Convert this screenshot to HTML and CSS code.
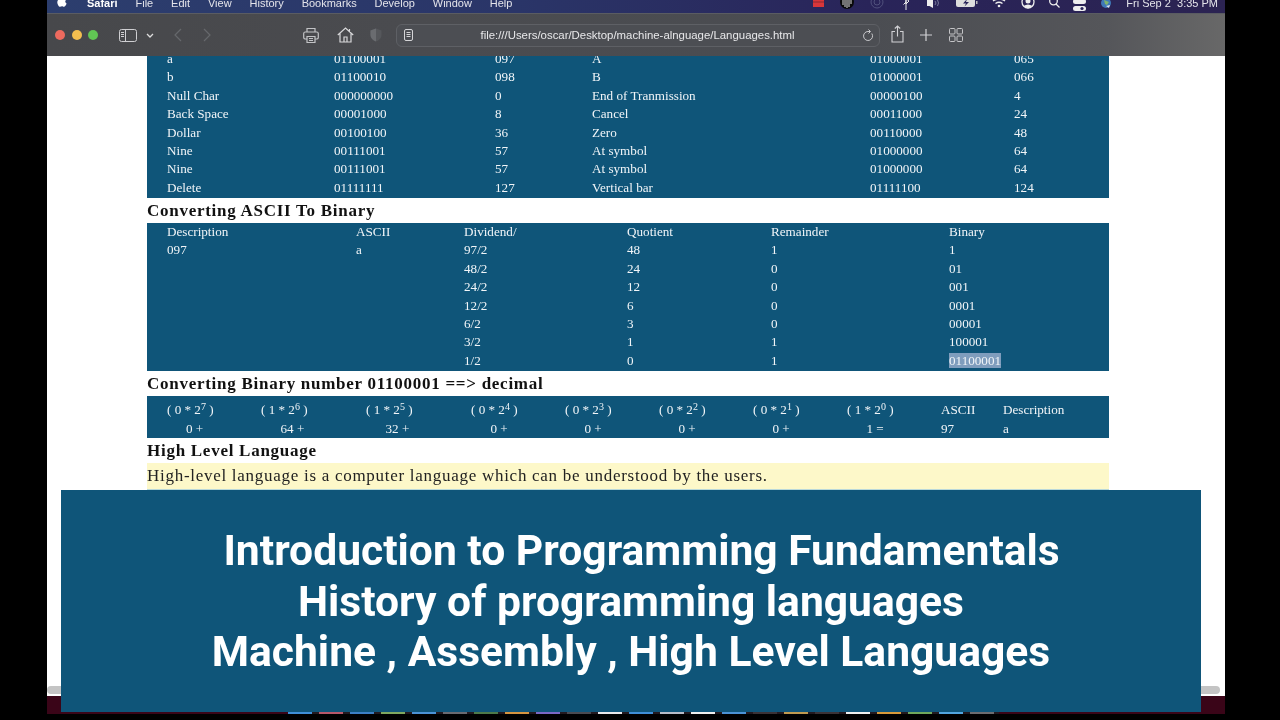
FILE: index.html
```html
<!DOCTYPE html>
<html lang="en">
<head>
<meta charset="utf-8">
<title>Languages</title>
<link rel="stylesheet" href="styles.css">
</head>
<body>
<div class="screen">
  <header class="menubar">
    <svg class="apple" viewBox="0 0 10 13" width="10" height="13"><path d="M5 3.2C6 2.4 8 2.3 9.2 3.8 7.8 4.8 8 6.8 9.6 7.4 9 9 8 10.8 6.9 10.8 6.1 10.8 5.800 10.3 5 10.300S3.800 10.800 3.100 10.800C1.800 10.800.3 8.200.3 6.200.3 3.200 3.200 2.300 5 3.200Z" fill="#fff"/></svg>
    <nav class="menu">
      <span class="menu-app">Safari</span><span>File</span><span>Edit</span><span>View</span><span>History</span><span>Bookmarks</span><span>Develop</span><span>Window</span><span>Help</span>
    </nav>
    <svg class="status" viewBox="-4 0 304 13" width="304" height="13">
      <rect x="-2" y="-1" width="11" height="8" fill="#d8363a"/><rect x="-2" y="1.500" width="11" height="1" fill="#8a2830"/>
      <circle cx="32" cy="2" r="7" fill="#0a0a0a"/><path d="M28 -1V5M30 -1V7M32 -1V8M34 -1V7M36 -1V4" stroke="#ddd" stroke-width="1"/>
      <circle cx="62" cy="2" r="6" fill="none" stroke="#50507c"/><circle cx="62" cy="2" r="3" fill="none" stroke="#50507c"/>
      <path d="M89 -1L94 3 91 6V-1L91 12 M88.500 6.500L91 4" fill="none" stroke="#eee" stroke-width="1" transform="translate(0 -2)"/>
      <path d="M112 0H114.500L118 -2V8L114.500 6H112Z" fill="#eee"/><path d="M120 1Q122 3 120 5M122.500 0Q124.500 3 122.500 6" fill="none" stroke="#77779a"/>
      <rect x="141" y="-2" width="19" height="9" rx="2" fill="#ddd"/><path d="M152 -1L148 3.500H151L149.500 6.500L154 2H151Z" fill="#29245a"/><rect x="161" y="1" width="1.500" height="3" fill="#bbb"/>
      <path d="M178 1Q184 -3 190 1M180.500 3.500Q184 1 187.500 3.500" fill="none" stroke="#eee" stroke-width="1.500"/><circle cx="184" cy="6" r="1.300" fill="#eee"/>
      <circle cx="213" cy="2" r="6" fill="none" stroke="#eee" stroke-width="1.300"/><circle cx="213" cy="1" r="2.500" fill="#eee"/><path d="M208.500 6Q213 3 217.500 6L213 8.500Z" fill="#eee"/>
      <circle cx="238.500" cy="1" r="3.800" fill="none" stroke="#eee" stroke-width="1.300"/><path d="M241 4L244.500 7.500" stroke="#eee" stroke-width="1.300"/>
      <rect x="258" y="-1" width="13" height="5" rx="2.500" fill="#eee"/><rect x="258" y="6" width="13" height="5" rx="2.500" fill="#eee"/><circle cx="267" cy="8.500" r="1.600" fill="#29245a"/>
      <circle cx="291" cy="3" r="5" fill="#3f78b8"/><path d="M289 0L294 2 292 5 290 4Z" fill="#7fb56c"/><path d="M291 6L295 5 294 8Z" fill="#d9e4ee"/>
    </svg>
    <span class="clock">Fri Sep 2&nbsp;&nbsp;3:35 PM</span>
  </header>

  <div class="toolbar">
    <div class="lights"><i class="light red"></i><i class="light amber"></i><i class="light green"></i></div>
    <svg class="tool sidebar" viewBox="0 0 18 13" width="18" height="13"><rect x=".5" y=".5" width="17" height="12" rx="2" fill="none" stroke="#cfcfd2"/><path d="M6.500 1V12M2 3.500H5M2 5.500H5M2 7.500H5" stroke="#cfcfd2"/></svg>
    <svg class="tool chevron" viewBox="0 0 8 5" width="8" height="5"><path d="M1 1L4 4 7 1" fill="none" stroke="#ddd" stroke-width="1.300"/></svg>
    <svg class="tool back" viewBox="0 0 8 14" width="8" height="14"><path d="M7 1L1 7 7 13" fill="none" stroke="#66686c" stroke-width="1.200"/></svg>
    <svg class="tool forward" viewBox="0 0 8 14" width="8" height="14"><path d="M1 1L7 7 1 13" fill="none" stroke="#66686c" stroke-width="1.200"/></svg>
    <svg class="tool print" viewBox="0 0 16 17" width="16" height="17"><path d="M4 5V1.500H12V5M4 12H2A1.500 1.500 0 0 1 .7 10.500V6.500A1.500 1.500 0 0 1 2 5H14A1.500 1.500 0 0 1 15.300 6.500V10.500A1.500 1.500 0 0 1 14 12H12M4 9.500H12V15.500H4Z" fill="none" stroke="#c2c3c6" stroke-width="1.200"/><path d="M6 11.500H10M6 13.500H10" stroke="#c2c3c6"/></svg>
    <svg class="tool home" viewBox="0 0 17 16" width="17" height="16"><path d="M.8 8L8.500 1 16.200 8M3 6.500V15H14V6.500M7 15V10H10V15M12.500 2V5" fill="none" stroke="#d8d8da" stroke-width="1.200"/></svg>
    <svg class="tool shield" viewBox="0 0 12 14" width="12" height="14"><path d="M6 .5L11.500 2.500V7C11.500 10 9 12.500 6 13.500 3 12.500 .5 10 .5 7V2.500Z" fill="#55575b"/><path d="M6 .5V13.500C3 12.500 .5 10 .5 7V2.500Z" fill="#6a6c70"/></svg>
    <div class="address">
      <svg class="doc" viewBox="0 0 9 12" width="9" height="12"><rect x=".5" y=".5" width="8" height="11" rx="1.500" fill="none" stroke="#d5d5d8"/><path d="M2.500 3.500H6.500M2.500 5.500H6.500M2.500 7.500H6.500" stroke="#d5d5d8"/></svg>
      <span class="url">file:///Users/oscar/Desktop/machine-alnguage/Languages.html</span>
      <svg class="reload" viewBox="0 0 12 13" width="12" height="13"><path d="M9.800 4.500A4.500 4.500 0 1 1 6 2.500H8M6.500 .5L8.500 2.500 6.500 4.500" fill="none" stroke="#c8c8cb" stroke-width="1"/></svg>
    </div>
    <svg class="tool share" viewBox="0 0 13 18" width="13" height="18"><path d="M4 6.500H1V17H12V6.500H9M6.500 11.500V1M3.800 3.500L6.500 1 9.200 3.500" fill="none" stroke="#d2d2d5" stroke-width="1.100"/></svg>
    <svg class="tool plus" viewBox="0 0 12 12" width="12" height="12"><path d="M6 0V12M0 6H12" stroke="#d2d2d5" stroke-width="1.200"/></svg>
    <svg class="tool tabs" viewBox="0 0 14 14" width="14" height="14"><g fill="none" stroke="#c4c4c7"><rect x=".5" y=".5" width="5.500" height="5.500" rx="1"/><rect x="8" y=".5" width="5.500" height="5.500" rx="1"/><rect x=".5" y="8" width="5.500" height="5.500" rx="1"/><rect x="8" y="8" width="5.500" height="5.500" rx="1"/></g></svg>
  </div>

  <main class="page">
    <div class="clip">
      <table class="data t1 shifted">
        <tr><td>a</td><td>01100001</td><td>097</td><td>A</td><td>01000001</td><td>065</td></tr>
        <tr><td>b</td><td>01100010</td><td>098</td><td>B</td><td>01000001</td><td>066</td></tr>
        <tr><td>Null Char</td><td>000000000</td><td>0</td><td>End of Tranmission</td><td>00000100</td><td>4</td></tr>
        <tr><td>Back Space</td><td>00001000</td><td>8</td><td>Cancel</td><td>00011000</td><td>24</td></tr>
        <tr><td>Dollar</td><td>00100100</td><td>36</td><td>Zero</td><td>00110000</td><td>48</td></tr>
        <tr><td>Nine</td><td>00111001</td><td>57</td><td>At symbol</td><td>01000000</td><td>64</td></tr>
        <tr><td>Nine</td><td>00111001</td><td>57</td><td>At symbol</td><td>01000000</td><td>64</td></tr>
        <tr><td>Delete</td><td>01111111</td><td>127</td><td>Vertical bar</td><td>01111100</td><td>124</td></tr>
      </table>
    </div>
    <h2 class="title">Converting ASCII To Binary</h2>
    <table class="data t2">
      <tr><td>Description</td><td>ASCII</td><td>Dividend/</td><td>Quotient</td><td>Remainder</td><td>Binary</td></tr>
      <tr><td>097</td><td>a</td><td>97/2</td><td>48</td><td>1</td><td>1</td></tr>
      <tr><td></td><td></td><td>48/2</td><td>24</td><td>0</td><td>01</td></tr>
      <tr><td></td><td></td><td>24/2</td><td>12</td><td>0</td><td>001</td></tr>
      <tr><td></td><td></td><td>12/2</td><td>6</td><td>0</td><td>0001</td></tr>
      <tr><td></td><td></td><td>6/2</td><td>3</td><td>0</td><td>00001</td></tr>
      <tr><td></td><td></td><td>3/2</td><td>1</td><td>1</td><td>100001</td></tr>
      <tr><td></td><td></td><td>1/2</td><td>0</td><td>1</td><td><span class="selected">01100001</span></td></tr>
    </table>
    <h2 class="title">Converting Binary number 01100001 ==&gt; decimal</h2>
    <table class="data t3">
      <tr class="powers"><td>( 0 * 2<sup>7</sup> )</td><td>( 1 * 2<sup>6</sup> )</td><td>( 1 * 2<sup>5</sup> )</td><td>( 0 * 2<sup>4</sup> )</td><td>( 0 * 2<sup>3</sup> )</td><td>( 0 * 2<sup>2</sup> )</td><td>( 0 * 2<sup>1</sup> )</td><td>( 1 * 2<sup>0</sup> )</td><td>ASCII</td><td>Description</td></tr>
      <tr class="values"><td>0 +</td><td>64 +</td><td>32 +</td><td>0 +</td><td>0 +</td><td>0 +</td><td>0 +</td><td>1 =</td><td>97</td><td>a</td></tr>
    </table>
    <h2 class="title">High Level Language</h2>
    <p class="note">High-level language is a computer language which can be understood by the users.</p>
    <div class="scrollbar"></div>
  </main>

  <footer class="wallpaper">
    <div class="dock">
      <i class="d" style="background:#3f8fd8"></i><i class="d" style="background:#b8586a"></i><i class="d" style="background:#3c7fc4"></i><i class="d" style="background:#7fa860"></i><i class="d" style="background:#4b93d6"></i><i class="d" style="background:#6a6a70"></i><i class="d" style="background:#4d7a4a"></i><i class="d" style="background:#d59440"></i><i class="d" style="background:#7a68c4"></i><i class="d" style="background:#4a4a50"></i><i class="d" style="background:#e8e8ea"></i><i class="d" style="background:#3f8fd8"></i><i class="d" style="background:#b8bcc8"></i><i class="d" style="background:#eeeeee"></i><i class="d" style="background:#4b93d6"></i><i class="d" style="background:#3a3236"></i><i class="d" style="background:#c09a50"></i><i class="d" style="background:#3a3236"></i><i class="d" style="background:#eeeeee"></i><i class="d" style="background:#d89a3a"></i><i class="d" style="background:#6fa85c"></i><i class="d" style="background:#52a6e0"></i><i class="d" style="background:#6c6c70"></i>
    </div>
  </footer>

  <aside class="banner">
    <p>&nbsp;&nbsp;Introduction to Programming Fundamentals</p>
    <p>History of programming languages</p>
    <p>Machine , Assembly , High Level Languages</p>
  </aside>
</div>
</body>
</html>
```
FILE: styles.css
```css
* { box-sizing: border-box; }
html, body { margin: 0; height: 100%; background: #000; overflow: hidden; }
.screen {
  position: relative;
  width: 1178px;
  height: 714px;
  margin-left: 47px;
  display: flex;
  flex-direction: column;
  overflow: hidden;
  background: #3a0518;
  filter: blur(.35px);
}

/* mac menu bar */
.menubar {
  flex: none;
  height: 13px;
  display: flex;
  align-items: flex-start;
  overflow: hidden;
  padding: 0 7px 0 10px;
  background: linear-gradient(90deg, #2c3e6e 0%, #2a3568 40%, #292459 70%, #2b2352 100%);
  font: 11px/7px "Liberation Sans", Arial, sans-serif;
  color: #e4e4ea;
}
.apple { flex: none; margin-top: -4px; }
.menu { display: flex; gap: 17.900px; margin-left: 20px; white-space: nowrap; }
.menu-app { font-weight: 700; color: #fff; }
.status { flex: none; margin-left: auto; }
.clock { margin-left: 11px; white-space: nowrap; }

/* safari toolbar */
.toolbar {
  flex: none;
  height: 43px;
  position: relative;
  display: flex;
  align-items: center;
  padding-left: 8px;
  border-top: 1px solid #5a5c62;
  background: linear-gradient(90deg, #47484b 0%, #4a4b4f 30%, #4b4d52 70%, #55565a 90%, #686868 100%);
}
.lights { display: flex; gap: 6.500px; flex: none; }
.light { width: 10px; height: 10px; border-radius: 50%; }
.red { background: #ed6a5e; }
.amber { background: #f4bf4f; }
.green { background: #61c554; }
.tool { flex: none; display: block; }
.sidebar { margin-left: 21px; }
.chevron { margin-left: 9px; }
.back { margin-left: 20px; }
.forward { margin-left: 21px; }
.print { margin-left: 92px; }
.home { margin-left: 18px; }
.shield { margin-left: 16px; }
.address {
  flex: none;
  width: 484px;
  height: 23px;
  margin-left: 14px;
  display: flex;
  align-items: center;
  padding: 0 5px 0 7px;
  border: 1px solid #5e6065;
  border-radius: 6px;
  background: #4c4e53;
}
.doc { flex: none; }
.url {
  flex: 1;
  text-align: center;
  font: 11.400px "Liberation Sans", Arial, sans-serif;
  color: #e8e8ea;
  white-space: nowrap;
}
.reload { flex: none; }
.share { margin-left: 11px; margin-bottom: 3px; }
.plus { margin-left: 16px; }
.tabs { margin-left: 17px; }

/* page */
.page {
  flex: none;
  position: relative;
  height: 640px;
  padding-left: 100px;
  background: #fff;
  overflow: hidden;
}
.clip { width: 962px; height: 142px; overflow: hidden; }
.data {
  width: 962px;
  table-layout: fixed;
  border-collapse: separate;
  border-spacing: 0;
  background: #0f5579;
  color: #f1f5f8;
  font: 13.150px/18.400px "Liberation Serif", "Times New Roman", serif;
}
.data td { padding: 0; height: 18.400px; white-space: nowrap; vertical-align: middle; }
.data td:first-child { padding-left: 20px; }
.shifted { margin-top: -6px; padding-bottom: 1px; }

.t1 td:nth-child(1) { width: 187px; }
.t1 td:nth-child(2) { width: 161px; }
.t1 td:nth-child(3) { width: 97px; }
.t1 td:nth-child(4) { width: 278px; }
.t1 td:nth-child(5) { width: 144px; }

.t2 { padding-bottom: 1px; }
.t2 td:nth-child(1) { width: 209px; }
.t2 td:nth-child(2) { width: 108px; }
.t2 td:nth-child(3) { width: 163px; }
.t2 td:nth-child(4) { width: 144px; }
.t2 td:nth-child(5) { width: 178px; }

.t3 { padding: 5px 0 0; }
.t3 td { width: 94px; }
.t3 td:nth-child(1) { width: 114px; }
.t3 td:nth-child(2), .t3 td:nth-child(3) { width: 105px; }
.t3 td:nth-child(9) { width: 62px; }
.t3 td:nth-child(10) { width: 106px; }
.values td:nth-child(-n+8) { padding-left: 19.500px; }
.values td:first-child { padding-left: 39px; }
.data sup { font-size: 10px; line-height: 0; vertical-align: 4px; }
.selected { background: #7f9dbd; }

.title {
  margin: 0;
  height: 25px;
  font: 700 17px/25px "Liberation Serif", "Times New Roman", serif;
  letter-spacing: .73px;
  color: #111;
}
.note {
  margin: 0;
  width: 962px;
  height: 27px;
  background: #fdf8c9;
  border-bottom: 1px solid #b9d8da;
  font: 17px/25px "Liberation Serif", "Times New Roman", serif;
  letter-spacing: .72px;
  color: #222;
}
.scrollbar {
  position: absolute;
  left: 0;
  right: 5px;
  top: 630px;
  height: 8px;
  border-radius: 4px;
  background: #c4c4c4;
}

.wallpaper {
  flex: 1;
  display: flex;
  align-items: flex-end;
  padding-left: 241px;
}
.dock {
  display: flex;
  gap: 7px;
  height: 2.500px;
  padding-right: 5px;
  background: #231a20;
}
.d { flex: none; width: 24px; }

/* title overlay */
.banner {
  position: absolute;
  left: 14px;
  top: 490px;
  width: 1140px;
  height: 222px;
  padding-top: 35px;
  background: #0f5579;
  color: #fff;
  text-align: center;
  font: 700 42.600px/50.500px Roboto, "Liberation Sans", sans-serif;
}
.banner p { margin: 0; white-space: nowrap; }
```
